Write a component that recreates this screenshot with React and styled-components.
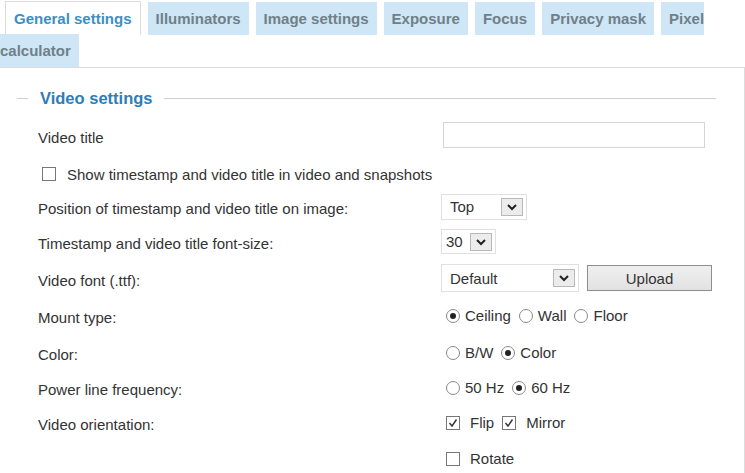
import React from 'react';
import styled, { createGlobalStyle } from 'styled-components';

const GlobalStyle = createGlobalStyle`
    body {
        margin: 0;
        background: #fff;
        font-family: "Liberation Sans", Arial, sans-serif;
        color: #333;
    }
`;

const tabs = ['General settings', 'Illuminators', 'Image settings', 'Exposure', 'Focus', 'Privacy mask', 'Pixel calculator'];

const TabBar = styled.div`
    padding-top: 3px;
    line-height: 32px;
    font-size: 15px;
    font-weight: bold;
`;

const Tab = styled.span`
    padding: 8px 8px;
    margin-right: 7px;
    background: ${({ $active }) => ($active ? '#fff' : '#cfe6f6')};
    color: ${({ $active }) => ($active ? '#3b8fc4' : '#6f8089')};
    border: ${({ $active }) => ($active ? '1px solid #dcdcdc' : 'none')};
    border-bottom: none;
    &:first-child {
        margin-left: 5px;
    }
`;

const Panel = styled.div`
    border-top: 1px solid #dcdcdc;
    border-right: 1px solid #dcdcdc;
    padding: 21px 28px 0 17px;
    min-height: 404px;
    box-sizing: border-box;
`;

const Group = styled.fieldset`
    margin: 0;
    padding: 0;
    border: none;
    border-top: 1px solid #cfcfcf;
    min-inline-size: 0;
`;

const Legend = styled.legend`
    margin-left: 11px;
    padding: 0 12px;
    font-size: 16.5px;
    font-weight: bold;
    color: #2f7db6;
`;

const Form = styled.div`
    display: grid;
    grid-template-columns: 403px 1fr;
    grid-template-rows: 38px 36px 33px 37px 36px 39px 35px 35px 35px 37px;
    padding: 8px 0 0 21px;
    font-size: 15px;
`;

const Label = styled.div`
    display: flex;
    align-items: center;
    padding-top: 4px;
    white-space: nowrap;
    grid-column: ${({ $wide }) => ($wide ? '1 / 3' : 'auto')};
    padding-left: ${({ $wide }) => ($wide ? '4px' : '0')};
`;

const Control = styled.div`
    display: flex;
    align-items: center;
    gap: 8px;
    grid-column: 2;
`;

const TextInput = styled.div`
    width: 262px;
    height: 26px;
    margin-left: 2px;
    border: 1px solid #d4d4d4;
    box-sizing: border-box;
`;

const SelectBox = styled.div`
    display: flex;
    align-items: center;
    justify-content: space-between;
    width: ${({ $width }) => $width}px;
    height: ${({ $height }) => $height || 26}px;
    padding: 0 3px 0 ${({ $pad }) => $pad || 8}px;
    border: 1px solid #e0e0e0;
    box-sizing: border-box;
    font-size: 15px;
`;

const Arrow = styled.span`
    display: flex;
    align-items: center;
    justify-content: center;
    width: 22px;
    height: 18px;
    border: 1px solid #b8b8b8;
    background: #ececec;
    box-sizing: border-box;

    svg {
        width: 12px;
        height: 10px;
    }
`;

const Button = styled.div`
    display: flex;
    align-items: center;
    justify-content: center;
    width: 125px;
    height: 26px;
    border: 1px solid #8e8e8e;
    background: linear-gradient(#efefef, #e2e2e2);
    box-sizing: border-box;
    font-size: 15px;
    color: #333;
`;

const Options = styled.div`
    display: flex;
    align-items: center;
    gap: 8px;
    padding-left: 5px;
`;

const Option = styled.span`
    display: flex;
    align-items: center;
    gap: ${({ $gap }) => $gap || 5}px;
`;

const Radio = styled.span`
    position: relative;
    width: 14px;
    height: 14px;
    border: 1px solid #8a8a8a;
    border-radius: 50%;
    box-sizing: border-box;
    background: #fff;

    &::after {
        content: '';
        display: ${({ $on }) => ($on ? 'block' : 'none')};
        position: absolute;
        top: 3px;
        left: 3px;
        width: 6px;
        height: 6px;
        border-radius: 50%;
        background: #222;
    }
`;

const Check = styled.span`
    display: flex;
    align-items: center;
    justify-content: center;
    width: 14px;
    height: 14px;
    border: 1px solid #777;
    box-sizing: border-box;
    background: #fff;

    svg {
        width: 10px;
        height: 10px;
    }
`;

const Select = ({ value, width, pad, height }) => (
    <SelectBox $width={width} $pad={pad} $height={height}>
        <span>{value}</span>
        <Arrow>
            <svg viewBox="0 0 12 10" fill="none">
                <path d="M2 3l4 4 4-4" stroke="#222" strokeWidth={2} />
            </svg>
        </Arrow>
    </SelectBox>
);

const CheckBox = ({ on }) => (
    <Check>
        {on && (
            <svg viewBox="0 0 10 10" fill="none">
                <path d="M1.5 5l2.5 3 4.5-6.5" stroke="#333" strokeWidth={1.4} />
            </svg>
        )}
    </Check>
);

const RadioGroup = ({ items, value }) => (
    <Options>
        {items.map((item) => (
            <Option key={item}>
                <Radio $on={item === value} />
                {item}
            </Option>
        ))}
    </Options>
);

const App = () => (
    <>
        <GlobalStyle />
        <TabBar>
            {tabs.map((t, i) => (
                <Tab key={t} $active={i === 0}>{t}</Tab>
            ))}
        </TabBar>
        <Panel>
            <Group>
                <Legend>Video settings</Legend>
                <Form>
                    <Label>Video title</Label>
                    <Control><TextInput /></Control>

                    <Label $wide>
                        <Option $gap={11}>
                            <CheckBox />
                            Show timestamp and video title in video and snapshots
                        </Option>
                    </Label>

                    <Label>Position of timestamp and video title on image:</Label>
                    <Control><Select value="Top" width={86} /></Control>

                    <Label>Timestamp and video title font-size:</Label>
                    <Control><Select value="30" width={55} pad={4} height={25} /></Control>

                    <Label>Video font (.ttf):</Label>
                    <Control>
                        <Select value="Default" width={138} height={28} />
                        <Button>Upload</Button>
                    </Control>

                    <Label>Mount type:</Label>
                    <Control><RadioGroup items={['Ceiling', 'Wall', 'Floor']} value="Ceiling" /></Control>

                    <Label>Color:</Label>
                    <Control><RadioGroup items={['B/W', 'Color']} value="Color" /></Control>

                    <Label>Power line frequency:</Label>
                    <Control><RadioGroup items={['50 Hz', '60 Hz']} value="60 Hz" /></Control>

                    <Label>Video orientation:</Label>
                    <Control>
                        <Options>
                            <Option $gap={10}><CheckBox on />Flip</Option>
                            <Option $gap={10}><CheckBox on />Mirror</Option>
                        </Options>
                    </Control>

                    <Control>
                        <Options>
                            <Option $gap={10}><CheckBox />Rotate</Option>
                        </Options>
                    </Control>
                </Form>
            </Group>
        </Panel>
    </>
);

export default App;
